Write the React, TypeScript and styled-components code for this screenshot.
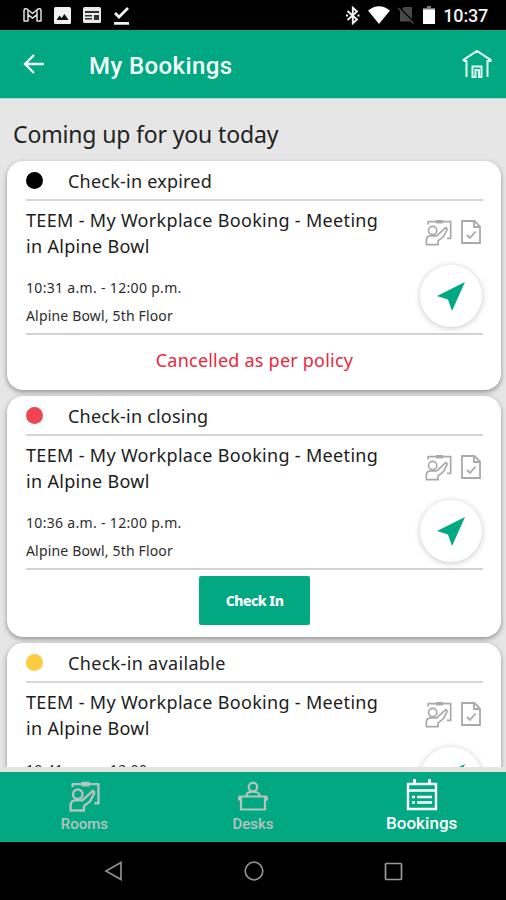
import React from "react";
import styled, { createGlobalStyle } from "styled-components";

const GREEN = "#02a881";

const GlobalStyle = createGlobalStyle`
  * { box-sizing: border-box; }
  body { margin: 0; background: #000; }
`;

const Screen = styled.div`
  width: 506px;
  height: 900px;
  display: flex;
  flex-direction: column;
  overflow: hidden;
  background: #000;
  font-family: "Noto Sans", sans-serif;
`;

const StatusBar = styled.div`
  height: 30px;
  flex: none;
  display: flex;
  align-items: center;
  justify-content: space-between;
  padding: 0 18px 0 23px;
`;

const StatusGroup = styled.div<{ $gap: number }>`
  display: flex;
  align-items: center;
  gap: ${(p) => p.$gap}px;
`;

const Clock = styled.span`
  font: 500 18px/30px Roboto, sans-serif;
  letter-spacing: -0.2px;
  color: #f2f2f2;
  margin-top: 2px;
`;

const Header = styled.header`
  height: 69px;
  flex: none;
  display: flex;
  align-items: center;
  padding: 0 14px 0 22px;
  background: ${GREEN};
  border-bottom: 1px solid #a5dfd0;
`;

const HeaderTitle = styled.h1`
  flex: 1;
  margin: 0 0 0 43px;
  padding-top: 4px;
  font: 500 24px/30px Roboto, sans-serif;
  letter-spacing: 0.4px;
  color: #f4fffc;
`;

const Content = styled.main`
  height: 668px;
  flex: none;
  overflow: hidden;
  padding: 0 5px 0 7px;
  background: #e6e6e6;
`;

const Heading = styled.h2`
  height: 62px;
  margin: 0;
  padding: 20px 0 0 6px;
  font-size: 23px;
  line-height: 30px;
  font-weight: 400;
  letter-spacing: -0.15px;
  color: #222;
`;

const Card = styled.article<{ $height: number; $gap: number }>`
  height: ${(p) => p.$height}px;
  margin-bottom: ${(p) => p.$gap}px;
  padding: 0 18px 0 19px;
  border-radius: 16px;
  background: #fff;
  box-shadow: 0 2px 5px rgba(0, 0, 0, 0.38);
`;

const CardStatus = styled.div`
  height: 40px;
  display: flex;
  align-items: center;
  border-bottom: 2px solid #d6d6d6;
`;

const Dot = styled.span<{ $color: string }>`
  width: 17px;
  height: 17px;
  margin-right: 25px;
  border-radius: 50%;
  background: ${(p) => p.$color};
`;

const StatusText = styled.span<{ $spacing: number }>`
  padding-top: 1px;
  font-size: 18px;
  line-height: 26px;
  letter-spacing: ${(p) => p.$spacing}px;
  color: #222;
`;

const CardBody = styled.div`
  height: 134px;
  display: flex;
  justify-content: space-between;
  border-bottom: 2px solid #d2d2d2;
`;

const Details = styled.div`
  padding-top: 6px;
`;

const Title = styled.h3`
  margin: 0 0 15px;
  font-size: 18px;
  line-height: 26px;
  font-weight: 400;
  letter-spacing: 0.32px;
  white-space: pre-line;
  color: #1c1c1c;
`;

const Meta = styled.p<{ $spacing: number }>`
  margin: 0;
  font-size: 14px;
  line-height: 28px;
  letter-spacing: ${(p) => p.$spacing}px;
  color: #2c2c2c;
`;

const Side = styled.div`
  width: 64px;
  display: flex;
  flex-direction: column;
  align-items: center;
`;

const Badges = styled.div`
  display: flex;
  gap: 8px;
  padding: 18px 0 19px;
  margin-left: 4px;
`;

const NavigateButton = styled.button`
  width: 62px;
  height: 62px;
  flex: none;
  display: flex;
  align-items: center;
  justify-content: center;
  padding: 0;
  border: 0;
  border-radius: 50%;
  background: #fff;
  box-shadow: 0 1px 6px rgba(0, 0, 0, 0.22);
`;

const CardFooter = styled.div`
  display: flex;
  justify-content: center;
`;

const Cancelled = styled.span`
  padding-top: 11px;
  font-size: 18px;
  line-height: 28px;
  letter-spacing: 0.22px;
  color: #e8283f;
`;

const CheckInButton = styled.button`
  width: 111px;
  height: 49px;
  margin-top: 6px;
  padding: 0;
  border: 0;
  border-radius: 2px;
  background: ${GREEN};
  font: 800 14px/20px "Noto Sans", sans-serif;
  letter-spacing: -0.5px;
  color: #fff;
`;

const TabBar = styled.nav`
  height: 75px;
  flex: none;
  display: grid;
  grid-template-columns: repeat(3, 1fr);
  border-top: 5px solid #e4e4e2;
  background: ${GREEN};
`;

const Tab = styled.div<{ $active?: boolean }>`
  display: flex;
  flex-direction: column;
  align-items: center;
  padding-top: ${(p) => (p.$active ? 7 : 9)}px;
  color: ${(p) => (p.$active ? "#fff" : "#b4c4c0")};
  font-family: Roboto, sans-serif;
  font-size: ${(p) => (p.$active ? 17 : 15)}px;
  font-weight: 500;
  line-height: 20px;
`;

const TabLabel = styled.span<{ $active?: boolean }>`
  margin-top: 2px;
  letter-spacing: ${(p) => (p.$active ? 0.05 : -0.05)}px;
`;

const SystemNav = styled.div`
  flex: 1;
  display: flex;
  align-items: center;
  justify-content: space-between;
  padding: 0 103px 0 104px;
`;

const RoomIcon = ({ size = 28, stroke = 2 }: { size?: number; stroke?: number }) => (
  <svg width={size} height={size} viewBox="0 0 30 30" fill="none" stroke="currentColor" strokeWidth={stroke} strokeLinejoin="round">
    <path d="M3.500 6V3H28.500V21.500H24.500" />
    <path d="M12 3h8" strokeWidth={stroke * 2} />
    <circle cx="8.500" cy="12.800" r="4.600" />
    <path d="M1.500 28.500V23.500q.3-4.500 4.500-4.700h7L23 9.500q2.200 1.300 1 3.500L20.500 19.500 14.500 24.300v4.200z" />
  </svg>
);

const DocIcon = () => (
  <svg width="22" height="26" viewBox="0 0 22 26" fill="none" stroke="currentColor" strokeWidth="1.800">
    <path d="M2 2h12.500l5.500 5.500V24H2z" />
    <path d="M14 2v6h6" />
    <path d="M7 16l3 3 5.500-6.500" />
  </svg>
);

const BadgeTint = styled.div`
  display: flex;
  color: #a9a9a9;
`;

type Booking = {
  color: string;
  status: string;
  statusSpacing: number;
  time: string;
  height: number;
  gap: number;
  footer: React.ReactNode;
};

const bookings: Booking[] = [
  { color: "#000", status: "Check-in expired", statusSpacing: 0.22, time: "10:31 a.m. - 12:00 p.m.", height: 229, gap: 6, footer: <Cancelled>Cancelled as per policy</Cancelled> },
  { color: "#ee4552", status: "Check-in closing", statusSpacing: 0.22, time: "10:36 a.m. - 12:00 p.m.", height: 241, gap: 6, footer: <CheckInButton>Check In</CheckInButton> },
  { color: "#fdcb3f", status: "Check-in available", statusSpacing: 0.33, time: "10:41 a.m. - 12:00 p.m.", height: 241, gap: 0, footer: null },
];

const BookingCard = ({ b }: { b: Booking }) => (
  <Card $height={b.height} $gap={b.gap}>
    <CardStatus>
      <Dot $color={b.color} />
      <StatusText $spacing={b.statusSpacing}>{b.status}</StatusText>
    </CardStatus>
    <CardBody>
      <Details>
        <Title>{"TEEM - My Workplace Booking - Meeting\nin Alpine Bowl"}</Title>
        <Meta $spacing={0.32}>{b.time}</Meta>
        <Meta $spacing={0.17}>Alpine Bowl, 5th Floor</Meta>
      </Details>
      <Side>
        <Badges>
          <BadgeTint><RoomIcon size={27} stroke={1.9} /></BadgeTint>
          <BadgeTint><DocIcon /></BadgeTint>
        </Badges>
        <NavigateButton aria-label="Navigate">
          <svg width="28" height="29" viewBox="0 0 28 29" fill={GREEN}>
            <path d="M28 0L0 14l11 3.500L15 29z" />
          </svg>
        </NavigateButton>
      </Side>
    </CardBody>
    <CardFooter>{b.footer}</CardFooter>
  </Card>
);

export default function App() {
  return (
    <>
      <GlobalStyle />
      <Screen>
        <StatusBar>
          <StatusGroup $gap={12}>
            <svg width="19" height="16" viewBox="0 0 19 16" fill="none" stroke="#ddd" strokeWidth="1.500" strokeLinejoin="round">
              <path d="M1 14V3.500Q1.500 .8 4 2l5.500 4.500L15 2q2.500-1.200 3 1.500V14h-4V7.500l-4.500 3.700L5 7.500V14z" />
              <path d="M5 7.500V3M14 7.500V3" />
            </svg>
            <svg width="17" height="17" viewBox="0 0 17 17">
              <rect width="17" height="17" rx="1.500" fill="#f2f2f2" />
              <path d="M2.500 13l3-4.500 2 2.500 3-4 4 6z" fill="#111" />
            </svg>
            <svg width="18" height="16" viewBox="0 0 18 16">
              <rect width="18" height="16" rx="1.500" fill="#e8e8e8" />
              <path d="M2 4h14v2H2zM2 8h7v1.500H2zM2 11h7v1.500H2zM11 8h5v5h-5z" fill="#333" />
            </svg>
            <svg width="17" height="19" viewBox="0 0 17 19" fill="none" stroke="#f2f2f2" strokeWidth="2.800">
              <path d="M2 7l4 4 9-9M1 17.300h15" />
            </svg>
          </StatusGroup>
          <StatusGroup $gap={8}>
            <svg width="14" height="19" viewBox="0 0 14 19" fill="none" stroke="#f2f2f2" strokeWidth="1.900">
              <path d="M1.500 5L11 13.500 6.800 17.300V1.700L11 5.500 1.500 14" />
              <path d="M0 9.500h2M11.500 9.500h2" />
            </svg>
            <svg width="22" height="18" viewBox="0 0 22 18" fill="#fff">
              <path d="M0 4.500Q11-4 22 4.500L11 18z" />
            </svg>
            <svg width="17" height="18" viewBox="0 0 17 18">
              <path d="M6 1h8v14.500H2V5z" fill="#484848" />
              <path d="M1 2l15 15" stroke="#000" strokeWidth="2.500" />
              <path d="M0 2l15.500 15.500" stroke="#555" strokeWidth="1.200" />
            </svg>
            <svg width="12" height="18" viewBox="0 0 12 18">
              <path d="M4 0h4v2h4v3H0V2h4z" fill="#777" />
              <path d="M0 3.500h12V18H0z" fill="#fff" />
            </svg>
            <Clock>10:37</Clock>
          </StatusGroup>
        </StatusBar>
        <Header>
          <svg width="24" height="22" viewBox="0 0 24 22" fill="none" stroke="#f4fffc" strokeWidth="2.300">
            <path d="M22 11H3.500M12 2L3 11l9 9" />
          </svg>
          <HeaderTitle>My Bookings</HeaderTitle>
          <svg width="30" height="30" viewBox="0 0 30 30" fill="none" stroke="#e2fff6" strokeWidth="2">
            <path d="M1.500 12V10.800L15 2l13.500 8.800V12h-3V28M1.500 12h3V28M10.500 28V17.500h9V28h-2.500V21h-3.500v7z" />
          </svg>
        </Header>
        <Content>
          <Heading>Coming up for you today</Heading>
          {bookings.map((b) => (
            <BookingCard key={b.status} b={b} />
          ))}
        </Content>
        <TabBar>
          <Tab>
            <RoomIcon size={31} stroke={2.3} />
            <TabLabel>Rooms</TabLabel>
          </Tab>
          <Tab>
            <svg width="30" height="31" viewBox="0 0 30 31" fill="none" stroke="currentColor" strokeWidth="2.200">
              <circle cx="15" cy="6" r="4.300" />
              <path d="M8 15.500q.5-4.800 7-4.800t7 4.800" />
              <path d="M1 15.500h28M3 15.500v13h24v-13M1 15.500v3h2M29 15.500v3h-2" />
            </svg>
            <TabLabel>Desks</TabLabel>
          </Tab>
          <Tab $active>
            <svg width="32" height="32" viewBox="0 0 32 32" fill="none" stroke="currentColor" strokeWidth="2.400">
              <path d="M2 5h28v25H2zM2 11.500h28" />
              <path d="M8.500 0v6M23.500 0v6" strokeWidth="3" />
              <path d="M6 18h3M11 18h15M6 23.500h3M11 23.500h15" strokeWidth="2.600" />
            </svg>
            <TabLabel $active>Bookings</TabLabel>
          </Tab>
        </TabBar>
        <SystemNav>
          <svg width="19" height="20" viewBox="0 0 19 20" fill="none" stroke="#8f8f8f" strokeWidth="1.700">
            <path d="M17 1.500v17L2 10z" />
          </svg>
          <svg width="20" height="20" viewBox="0 0 20 20" fill="none" stroke="#8f8f8f" strokeWidth="1.700">
            <circle cx="10" cy="10" r="8.800" />
          </svg>
          <svg width="19" height="19" viewBox="0 0 19 19" fill="none" stroke="#9a9a9a" strokeWidth="1.700">
            <rect x="1.500" y="1.500" width="16" height="16" rx="1" />
          </svg>
        </SystemNav>
      </Screen>
    </>
  );
}
